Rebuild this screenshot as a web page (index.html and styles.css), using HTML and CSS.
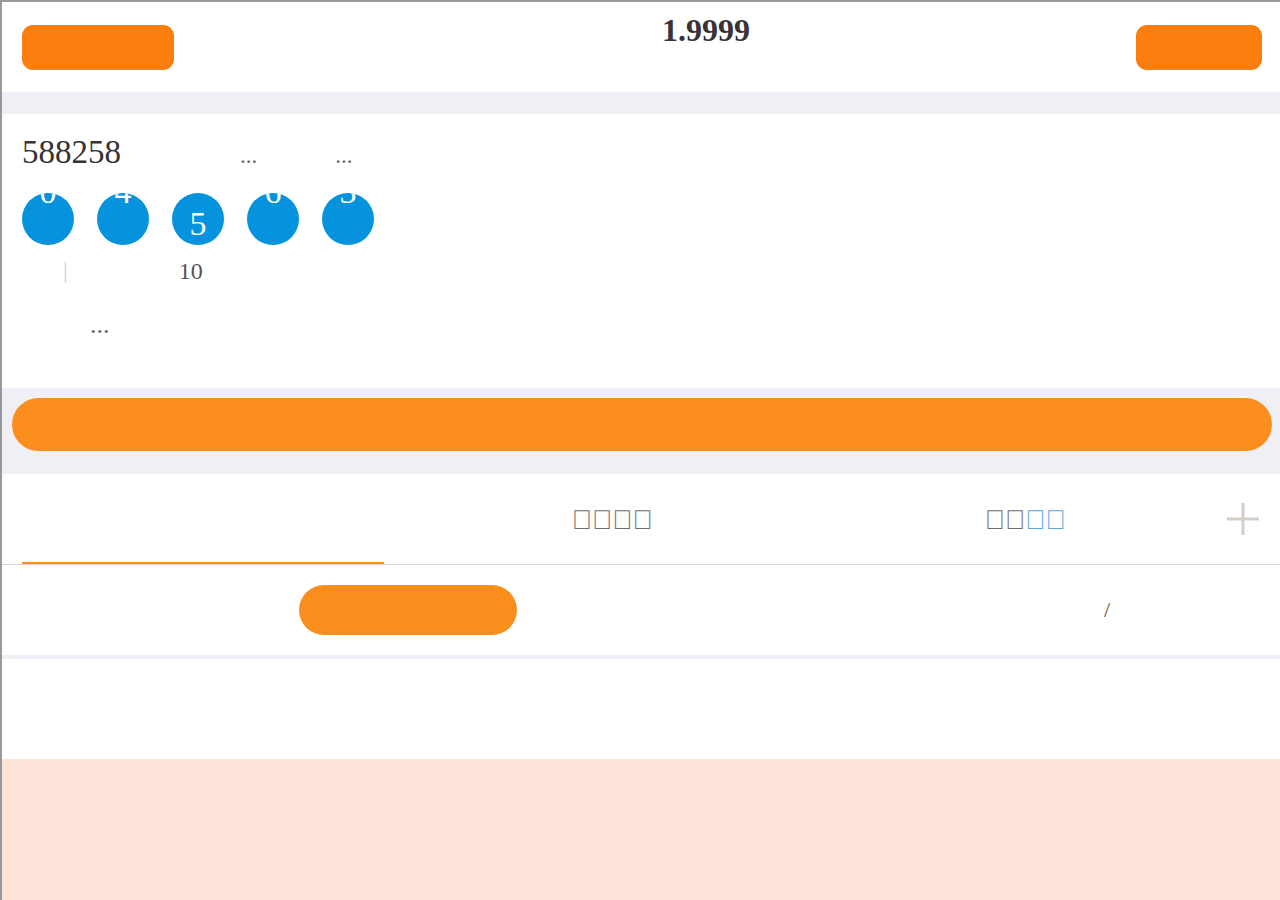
FILE: index.html
```html
<!DOCTYPE html>
<html>
<head>
<meta charset="utf-8">
<link rel="stylesheet" href="styles.css">
</head>
<body>
<div class="frame">
  <header class="topbar">
    <div class="btn btn-left"></div>
    <div class="title">1.9999</div>
    <div class="btn btn-right"></div>
  </header>
  <div class="band-sm"></div>
  <section class="draw">
    <div class="draw-head">
      <span class="issue">588258</span>
      <span class="dots dots-a">...</span>
      <span class="dots dots-b">...</span>
    </div>
    <div class="balls">
      <div class="ball roll"><span>0</span></div>
      <div class="ball roll"><span>4</span></div>
      <div class="ball"><span>5</span></div>
      <div class="ball roll"><span>6</span></div>
      <div class="ball roll"><span>3</span></div>
    </div>
    <div class="meta">
      <span class="sep">|</span>
      <span class="count">10</span>
    </div>
    <div class="more">...</div>
  </section>
  <div class="band-btn"><div class="big-btn"></div></div>
  <nav class="tabs">
    <div class="tab tab-1 active"></div>
    <div class="tab tab-2"><span class="tofu">&#xE000;&#xE001;&#xE002;&#xE003;</span></div>
    <div class="tab tab-3"><span class="tofu">&#xE004;&#xE005;<span class="blue">&#xE006;&#xE007;</span></span></div>
    <div class="tab-add">
      <svg width="34" height="34" viewBox="0 0 34 34"><line x1="17" y1="1" x2="17" y2="33" stroke="#d4cec9" stroke-width="3"/><line x1="1" y1="17" x2="33" y2="17" stroke="#d4cec9" stroke-width="3"/></svg>
    </div>
  </nav>
  <div class="row-action">
    <div class="pill"></div>
    <span class="slash">/</span>
  </div>
  <div class="band-xs"></div>
  <div class="blank"></div>
  <div class="peach"></div>
</div>
</body>
</html>
```
FILE: styles.css
```css
html, body {
  margin: 0;
  padding: 0;
  background: #fff;
}
body {
  font-family: "Liberation Serif", "Times New Roman", serif;
  color: #333;
}
.frame {
  border-top: 2px solid #999;
  border-left: 2px solid #999;
  width: 1278px;
  height: 898px;
  overflow: hidden;
  display: flex;
  flex-direction: column;
}
.topbar {
  height: 90px;
  box-sizing: border-box;
  padding: 23px 18px 0 20px;
  display: flex;
  align-items: flex-start;
}
.btn {
  height: 45px;
  border-radius: 11px;
  background: #fb7e0e;
  flex: none;
}
.btn-left { width: 152px; }
.btn-right { width: 126px; }
.title {
  flex: 1;
  text-align: center;
  padding-left: 102px;
  margin-top: -13px;
  font-size: 32px;
  line-height: 37px;
  font-weight: bold;
  color: #3a3238;
}
.band-sm {
  height: 22px;
  background: #efeff5;
}
.draw {
  height: 274px;
  box-sizing: border-box;
  padding: 20px 0 0 20px;
}
.draw-head {
  display: flex;
  align-items: baseline;
  height: 37px;
}
.issue {
  font-size: 33px;
  line-height: 37px;
  color: #333;
}
.dots {
  font-size: 23px;
  color: #666;
}
.dots-a { margin-left: 119px; }
.dots-b { margin-left: 78px; }
.balls {
  display: flex;
  gap: 23px;
  margin-top: 22px;
}
.ball {
  width: 52px;
  height: 52px;
  border-radius: 50%;
  background: #0593de;
  overflow: hidden;
  color: #fff;
  text-align: center;
}
.ball span {
  display: block;
  font-size: 34px;
  line-height: 52px;
  transform: translateY(5px);
}
.ball.roll span {
  transform: translateY(-27px);
}
.meta {
  display: flex;
  align-items: baseline;
  margin-top: 12px;
  height: 28px;
  font-size: 24px;
  line-height: 28px;
}
.sep {
  color: #d2d2d2;
  margin-left: 41px;
  position: relative;
  top: -1px;
}
.count {
  color: #5a5258;
  margin-left: 111px;
}
.more {
  margin-top: 26px;
  margin-left: 68px;
  font-size: 26px;
  line-height: 28px;
  color: #666;
}
.band-btn {
  height: 86px;
  box-sizing: border-box;
  padding: 10px 8px 0 10px;
  background: #efeff5;
}
.big-btn {
  height: 53px;
  border-radius: 27px;
  background: #fb8e1c;
}
.tabs {
  height: 91px;
  box-sizing: border-box;
  border-bottom: 1px solid #ddd6cf;
  padding-left: 20px;
  display: flex;
}
.tab {
  display: flex;
  align-items: center;
  justify-content: center;
  box-sizing: border-box;
}
.tab-1 { width: 362px; }
.tab-2 { width: 456px; }
.tab-3 { width: 370px; }
.tab.active {
  border-bottom: 2px solid #fb8e1c;
}
.tofu {
  font-family: "Liberation Sans", sans-serif;
  font-size: 27px;
  line-height: 30px;
  color: #6e6e6e;
  padding-top: 2px;
}
.tofu .blue { color: #5aa6dc; }
.tab-add {
  margin-left: 16px;
  display: flex;
  align-items: center;
}
.tab-add svg { display: block; }
.row-action {
  height: 90px;
  box-sizing: border-box;
  padding-left: 297px;
  display: flex;
  align-items: center;
}
.pill {
  width: 218px;
  height: 50px;
  border-radius: 25px;
  background: #fa8e1c;
}
.slash {
  margin-left: 587px;
  font-size: 22px;
  color: #6a5040;
}
.band-xs {
  height: 4px;
  background: #efeff5;
}
.blank {
  height: 100px;
}
.peach {
  flex: 1;
  background: #fee3d9;
}
```
